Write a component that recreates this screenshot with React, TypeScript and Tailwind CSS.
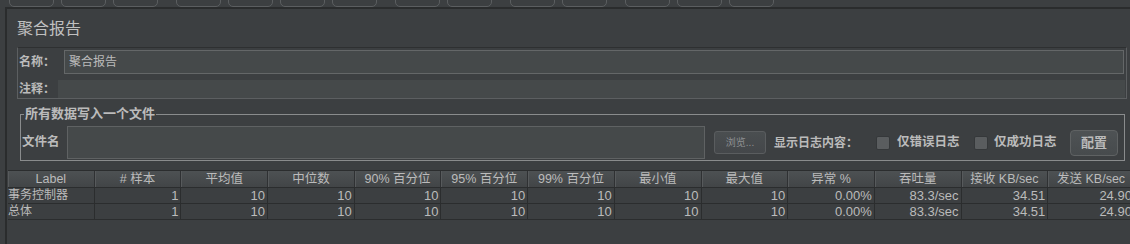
import React from "react"

const toolbarGroups = [3, 4, 2, 2, 3]

const columns = [
  "Label",
  "# 样本",
  "平均值",
  "中位数",
  "90% 百分位",
  "95% 百分位",
  "99% 百分位",
  "最小值",
  "最大值",
  "异常 %",
  "吞吐量",
  "接收 KB/sec",
  "发送 KB/sec",
]

const rows = [
  ["事务控制器", "1", "10", "10", "10", "10", "10", "10", "10", "0.00%", "83.3/sec", "34.51", "24.90"],
  ["总体", "1", "10", "10", "10", "10", "10", "10", "10", "0.00%", "83.3/sec", "34.51", "24.90"],
]

function Checkbox() {
  return (
    <div className="w-[14px] h-[14px] shrink-0 rounded-[2px] border border-[#35383a] bg-[#5a5d5f]" />
  )
}

export default function App() {
  return (
    <div className="w-[1130px] h-[244px] overflow-hidden bg-[#3c3f41] text-[#bbbbbb] font-['Liberation_Sans','Noto_Sans_CJK_SC',sans-serif] flex flex-col">
      {/* toolbar button bottoms */}
      <div className="h-[7px] pl-[9px] flex items-end gap-[18px] overflow-hidden shrink-0">
        {toolbarGroups.map((n, g) => (
          <div key={g} className="flex items-end gap-[7px]">
            {Array.from({ length: n }, (_, i) => (
              <div
                key={i}
                className="w-[45px] h-[16px] shrink-0 rounded-[5px] border border-[#5b5e60]"
              />
            ))}
          </div>
        ))}
      </div>

      <div className="flex-1 ml-[5px] border-l-2 border-t-2 border-[#2a2c2d] flex flex-col">
        <div className="ml-[10px] mt-[10px] h-[20px] text-[16px] leading-[20px] text-[#c0c0c0]">
          聚合报告
        </div>

        {/* name / comment */}
        <div className="ml-[10px] mt-[8px] w-[1110px] border border-[#5c5f61] border-t-[#2e3031] flex flex-col">
          <div className="mt-[2px] flex items-center h-[24px]">
            <span className="w-[46px] pl-[1px] text-[12px] font-bold whitespace-nowrap">名称：</span>
            <div className="flex-1 mr-[2px] h-[24px] border border-[#646768] bg-[#45494a] px-[4px] text-[12px] leading-[22px]">
              聚合报告
            </div>
          </div>
          <div className="mt-[6px] flex items-center h-[18px]">
            <span className="w-[40px] pl-[1px] text-[12px] font-bold whitespace-nowrap overflow-hidden">注释：</span>
            <div className="flex-1 mr-[1px] h-[18px] bg-[#45494a]" />
          </div>
        </div>

        {/* write to file */}
        <fieldset className="ml-[13px] mt-[7px] w-[1105px] border border-[#8a8c8d]">
          <legend className="ml-[3px] px-[1px] text-[13px] leading-[16px] font-bold text-[#bbbbbb]">
            所有数据写入一个文件
          </legend>
          <div className="pt-[4px] pb-[1px] flex items-center">
            <span className="w-[46px] pl-[1px] text-[12.5px] font-bold">文件名</span>
            <div className="w-[638px] h-[33px] border border-[#5f6263] bg-[#45494a]" />
            <div className="ml-[9px] w-[52px] h-[23px] rounded-[3px] border border-[#5a5d5f] bg-linear-to-b from-[#4a4e50] to-[#44474a] flex items-center justify-center text-[10px] text-[#8e9092]">
              浏览...
            </div>
            <span className="ml-[8px] w-[84px] text-[12px] font-bold whitespace-nowrap">显示日志内容：</span>
            <div className="ml-[18px]">
              <Checkbox />
            </div>
            <span className="ml-[7px] w-[64px] text-[12.5px] font-bold whitespace-nowrap">仅错误日志</span>
            <div className="ml-[13px]">
              <Checkbox />
            </div>
            <span className="ml-[6px] w-[64px] text-[12.5px] font-bold whitespace-nowrap">仅成功日志</span>
            <div className="ml-[12px] w-[48px] h-[26px] rounded-[4px] border border-[#5f6263] bg-linear-to-b from-[#4e5254] to-[#474b4d] flex items-center justify-center text-[13px] font-bold">
              配置
            </div>
          </div>
        </fieldset>

        {/* table */}
        <div className="ml-[1px] mt-[9px] border-t border-[#2b2d2e]">
          <div className="grid grid-cols-[repeat(13,86.7px)] h-[17px] border-b border-[#2b2d2e] bg-linear-to-b from-[#4d5153] to-[#424547]">
            {columns.map((c, i) => (
              <div
                key={i}
                className="border-r border-[#2f3133] shadow-[inset_1px_0_0_#575a5c] text-center text-[12.5px] leading-[16px] whitespace-nowrap overflow-hidden"
              >
                {c}
              </div>
            ))}
          </div>
          {rows.map((r, ri) => (
            <div
              key={ri}
              className="grid grid-cols-[repeat(13,86.7px)] h-[16px] border-b border-[#2b2d2e]"
            >
              {r.map((v, ci) => (
                <div
                  key={ci}
                  className={
                    ci === 0
                      ? "border-r border-[#2b2d2e] text-[12px] leading-[15px] whitespace-nowrap overflow-hidden"
                      : "border-r border-[#2b2d2e] pr-[2px] text-right text-[13px] leading-[15px] whitespace-nowrap overflow-hidden"
                  }
                >
                  {v}
                </div>
              ))}
            </div>
          ))}
        </div>
      </div>
    </div>
  )
}
